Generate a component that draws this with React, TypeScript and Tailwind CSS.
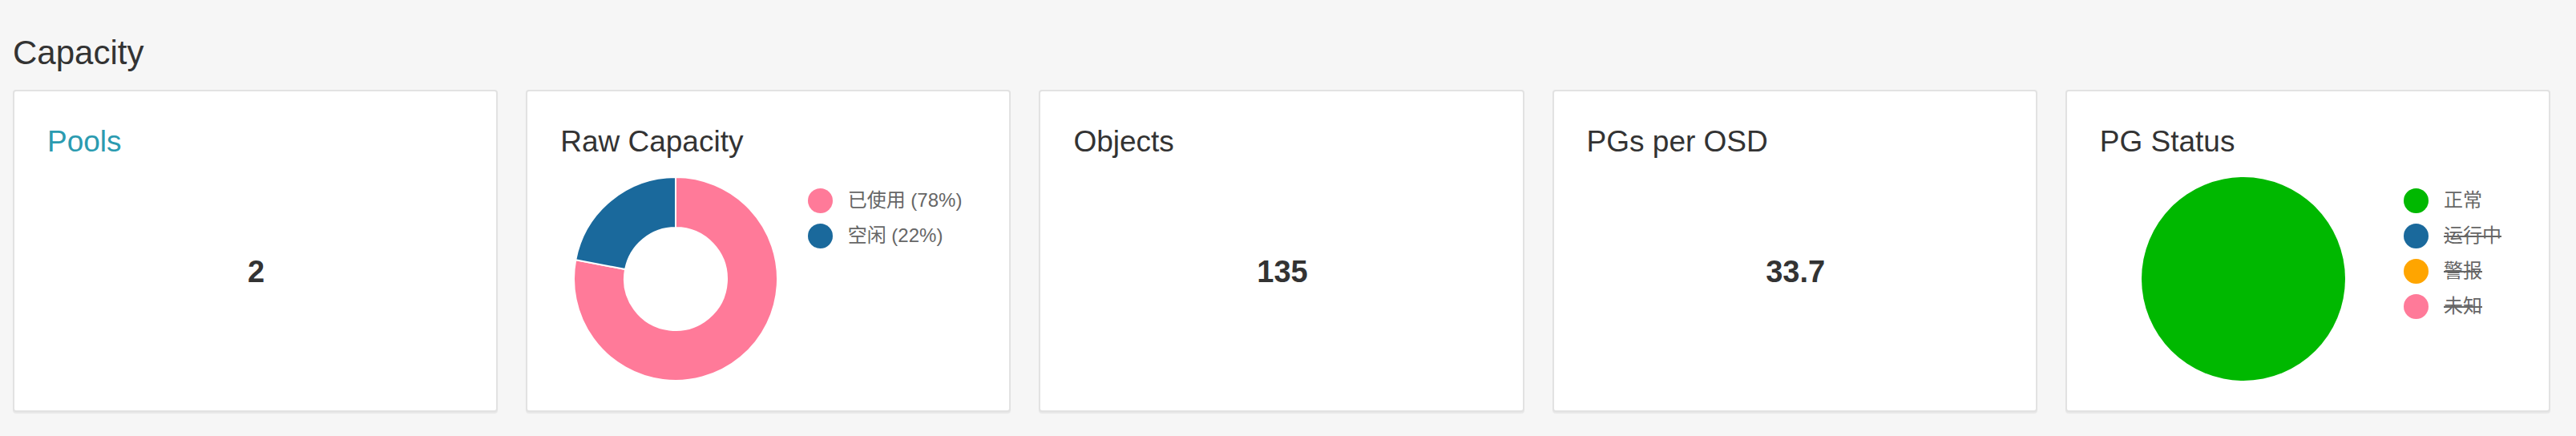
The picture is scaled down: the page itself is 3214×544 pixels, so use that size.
import React from 'react';

type Slice = { label: string; value: number; color: string };
type LegendItem = { label: string; color: string; hidden?: boolean };

const arcPath = (cx: number, cy: number, r0: number, r1: number, a0: number, a1: number) => {
  const pt = (r: number, a: number) => {
    const rad = (a * Math.PI) / 180;
    return `${(cx + r * Math.sin(rad)).toFixed(2)} ${(cy - r * Math.cos(rad)).toFixed(2)}`;
  };
  const large = a1 - a0 > 180 ? 1 : 0;
  return `M ${pt(r1, a0)} A ${r1} ${r1} 0 ${large} 1 ${pt(r1, a1)} L ${pt(r0, a1)} A ${r0} ${r0} 0 ${large} 0 ${pt(r0, a0)} Z`;
};

function Donut({ slices, inner }: { slices: Slice[]; inner: number }) {
  const total = slices.reduce((s, x) => s + x.value, 0);
  let start = 0;
  return (
    <svg width="256" height="256" viewBox="0 0 256 256">
      {slices.map((s) => {
        const sweep = (s.value / total) * 360;
        const d = arcPath(128, 128, inner, 127, start, start + sweep);
        start += sweep;
        return <path key={s.label} d={d} fill={s.color} stroke="#ffffff" strokeWidth="2" />;
      })}
    </svg>
  );
}

function Legend({ items }: { items: LegendItem[] }) {
  return (
    <div className="px-[20px] pt-[29px]">
      {items.map((it) => (
        <div key={it.label} className="flex h-[44px] items-center gap-[19px]">
          <span className="h-[31px] w-[31px] shrink-0 rounded-full" style={{ backgroundColor: it.color }} />
          <span
            className={`whitespace-nowrap text-[24px] leading-[30px] text-[#666666] ${it.hidden ? 'line-through decoration-2' : ''}`}
          >
            {it.label}
          </span>
        </div>
      ))}
    </div>
  );
}

function Card({ title, link, children }: { title: string; link?: boolean; children: React.ReactNode }) {
  return (
    <div className="h-[402px] rounded-[4px] border-2 border-[#e2e2e2] bg-white pl-[41px] pr-[39px] pt-[41px] shadow-[0_2px_1px_rgba(0,0,0,0.06)]">
      <div className={`text-[37px] leading-[44px] ${link ? 'text-[#2b9bb0]' : 'text-[#333333]'}`}>{title}</div>
      {children}
    </div>
  );
}

function Value({ value }: { value: string }) {
  return (
    <div className="flex h-[280px] items-center justify-center">
      <span className="text-[38px] font-bold leading-[44px] text-[#333333]">{value}</span>
    </div>
  );
}

export default function App() {
  const pink = '#ff7a99';
  const blue = '#1a699c';

  return (
    <div className="h-[544px] w-full bg-[#f6f6f6] pl-[16px] pr-[32px] font-['Liberation_Sans','Noto_Sans_CJK_SC',sans-serif]">
      <h2 className="pt-[42px] text-[42px] font-normal leading-[48px] text-[#333333]">Capacity</h2>

      <div className="mt-[22px] grid grid-cols-5 gap-[35px]">
        <Card title="Pools" link>
          <Value value="2" />
        </Card>

        <Card title="Raw Capacity">
          <div className="flex h-[280px]">
            <div className="flex flex-1 justify-center pt-[21px]">
              <Donut
                inner={64}
                slices={[
                  { label: '已使用', value: 78, color: pink },
                  { label: '空闲', value: 22, color: blue },
                ]}
              />
            </div>
            <Legend
              items={[
                { label: '已使用 (78%)', color: pink },
                { label: '空闲 (22%)', color: blue },
              ]}
            />
          </div>
        </Card>

        <Card title="Objects">
          <Value value="135" />
        </Card>

        <Card title="PGs per OSD">
          <Value value="33.7" />
        </Card>

        <Card title="PG Status">
          <div className="flex h-[280px]">
            <div className="flex flex-1 justify-center pt-[21px]">
              <svg width="256" height="256" viewBox="0 0 256 256">
                <circle cx="128" cy="128" r="127" fill="#00b800" />
              </svg>
            </div>
            <Legend
              items={[
                { label: '正常', color: '#00b800' },
                { label: '运行中', color: blue, hidden: true },
                { label: '警报', color: '#ffa500', hidden: true },
                { label: '未知', color: pink, hidden: true },
              ]}
            />
          </div>
        </Card>
      </div>
    </div>
  );
}
